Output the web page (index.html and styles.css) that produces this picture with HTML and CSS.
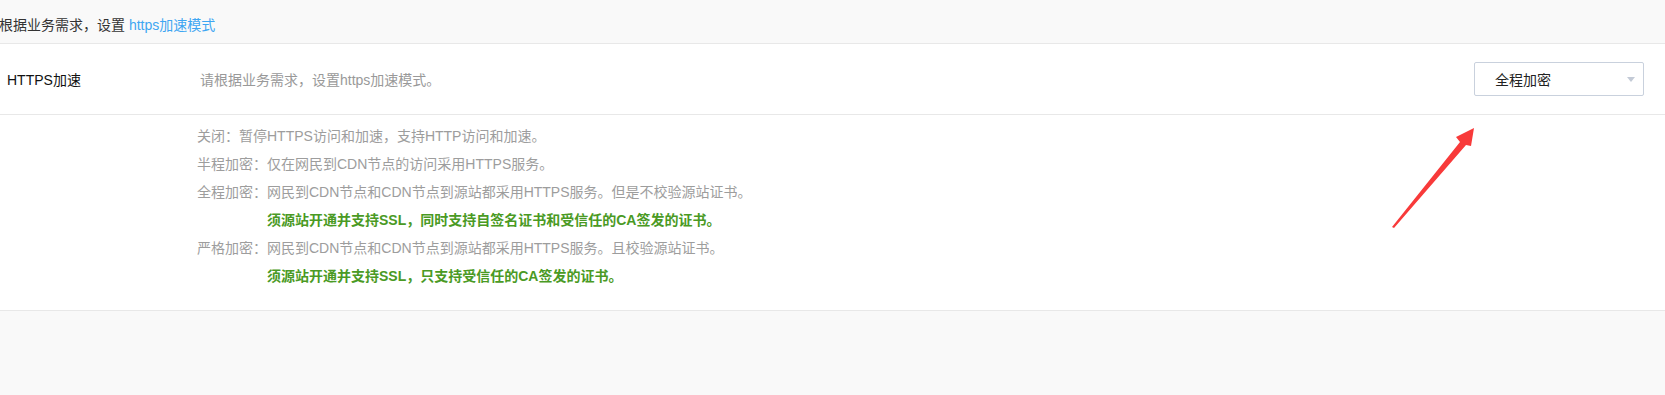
FILE: index.html
```html
<!DOCTYPE html>
<html lang="zh">
<head>
<meta charset="utf-8">
<title>HTTPS加速</title>
<link rel="stylesheet" href="styles.css">
</head>
<body>
<div class="page">
  <div class="tip-bar">根据业务需求，设置 <a class="link" href="#">https加速模式</a></div>
  <div class="panel">
    <div class="setting-row">
      <div class="setting-label">HTTPS加速</div>
      <div class="setting-desc">请根据业务需求，设置https加速模式。</div>
      <div class="select">
        <span class="select-value">全程加密</span>
        <span class="select-caret"></span>
      </div>
    </div>
    <div class="help">
      <div class="help-line">关闭：暂停HTTPS访问和加速，支持HTTP访问和加速。</div>
      <div class="help-line">半程加密：仅在网民到CDN节点的访问采用HTTPS服务。</div>
      <div class="help-line">全程加密：网民到CDN节点和CDN节点到源站都采用HTTPS服务。但是不校验源站证书。</div>
      <div class="help-line note">须源站开通并支持SSL，同时支持自签名证书和受信任的CA签发的证书。</div>
      <div class="help-line">严格加密：网民到CDN节点和CDN节点到源站都采用HTTPS服务。且校验源站证书。</div>
      <div class="help-line note">须源站开通并支持SSL，只支持受信任的CA签发的证书。</div>
    </div>
  </div>
  <svg class="annot" width="1665" height="395" viewBox="0 0 1665 395">
    <polygon points="1392,227 1460,142 1456,137 1474,128 1471,146 1466,145 1394,228" fill="#f83a3a"/>
  </svg>
</div>
</body>
</html>
```

FILE: styles.css
```css
html, body {
  margin: 0;
  padding: 0;
}
body {
  background: #f9f9f9;
  font-family: "Liberation Sans", Arial, "Noto Sans CJK SC", sans-serif;
  color: #333;
}
.page {
  position: relative;
  width: 1665px;
  height: 395px;
  overflow: hidden;
}
.tip-bar {
  height: 44px;
  box-sizing: border-box;
  padding-top: 15px;
  margin-left: -1px;
  font-size: 14px;
  line-height: 20px;
  color: #333;
  border-bottom: 1px solid #e8e8e8;
}
.link {
  color: #3ea6f2;
  text-decoration: none;
}
.panel {
  background: #fff;
  border-bottom: 1px solid #e8e8e8;
}
.setting-row {
  display: grid;
  grid-template-columns: 193px 1fr 170px;
  align-items: center;
  height: 70px;
  padding-left: 7px;
  padding-right: 21px;
  border-bottom: 1px solid #e8e8e8;
}
.setting-label {
  font-size: 14px;
  color: #111;
}
.setting-desc {
  font-size: 14px;
  color: #999;
}
.select {
  height: 34px;
  box-sizing: border-box;
  border: 1px solid #c9d1dd;
  border-radius: 2px;
  display: flex;
  align-items: center;
  justify-content: space-between;
  padding: 0 8px 0 20px;
}
.select-value {
  font-size: 14px;
  color: #222;
}
.select-caret {
  width: 0;
  height: 0;
  border-left: 4px solid transparent;
  border-right: 4px solid transparent;
  border-top: 5px solid #c3cad6;
}
.help {
  display: flex;
  flex-direction: column;
  padding: 7px 0 20px 197px;
  font-size: 14px;
  line-height: 28px;
  color: #9d9d9d;
}
.help-line {
  white-space: nowrap;
}
.note {
  padding-left: 70px;
  color: #4a9a24;
  font-weight: bold;
}
.annot {
  position: absolute;
  left: 0;
  top: 0;
  pointer-events: none;
}
```
